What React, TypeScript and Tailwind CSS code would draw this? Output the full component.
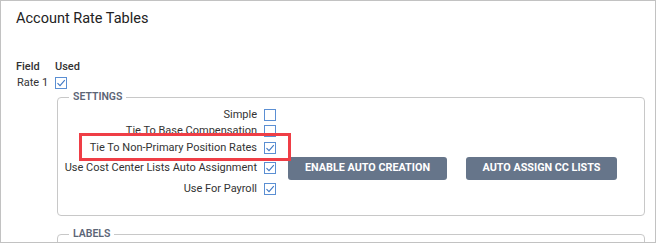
import React from "react";

function Check({ checked }: { checked?: boolean }) {
  return (
    <span className="flex h-[12px] w-[12px] shrink-0 items-center justify-center border border-[#5b8fd3] bg-white">
      {checked && (
        <svg width="10" height="10" viewBox="0 0 10 10" fill="none">
          <path d="M1.5 5.2 L4 7.7 L8.8 2.2" stroke="#3f78c4" strokeWidth="1.1" />
        </svg>
      )}
    </span>
  );
}

const settings = [
  { label: "Simple", checked: false, h: "h-[16px]" },
  { label: "Tie To Base Compensation", checked: false, h: "h-[16px]" },
  { label: "Tie To Non-Primary Position Rates", checked: true, h: "h-[17px]" },
  { label: "Use Cost Center Lists Auto Assignment", checked: true, h: "h-[24px]", buttons: true },
  { label: "Use For Payroll", checked: true, h: "h-[17px]" },
];

export default function App() {
  return (
    <div className="relative h-[243px] w-[656px] overflow-hidden border border-[#c2c2c2] bg-white font-['Roboto',sans-serif] text-[11px] text-[#333]">
      <h1 className="pl-[15px] pt-[8px] text-[14.5px] leading-[20px] text-[#222]">Account Rate Tables</h1>

      <div className="mt-[30px] grid grid-cols-[39px_auto] pl-[15px] font-medium leading-[16px]">
        <span>Field</span>
        <span>Used</span>
        <span className="pl-[1px] font-normal">Rate 1</span>
        <span className="flex h-[16px] items-center">
          <Check checked />
        </span>
      </div>

      <fieldset className="ml-[56px] mt-[-1px] h-[126px] w-[588px] rounded-[4px] border border-[#c8c8c8] px-0 pb-0">
        <legend className="ml-[11px] px-[4px] text-[10.5px] font-semibold leading-[14px] text-[#5c6576]">SETTINGS</legend>
        <div className="flex flex-col pt-[3px]">
          {settings.map((s) => (
            <div key={s.label} className={`flex items-center ${s.h}`}>
              <span className="w-[206px] pr-[7px] text-right leading-[16px] whitespace-nowrap">{s.label}</span>
              <Check checked={s.checked} />
              {s.buttons && (
                <div className="ml-[12px] flex gap-[19px]">
                  <button className="h-[23px] w-[159px] rounded-[3px] bg-[#66758a] text-[10.8px] font-bold text-white">
                    ENABLE AUTO CREATION
                  </button>
                  <button className="h-[23px] w-[151px] rounded-[3px] bg-[#66758a] text-[10.8px] font-bold text-white">
                    AUTO ASSIGN CC LISTS
                  </button>
                </div>
              )}
            </div>
          ))}
        </div>
      </fieldset>

      <fieldset className="ml-[56px] mt-[11px] h-[40px] w-[588px] rounded-[4px] border border-[#c8c8c8] px-0">
        <legend className="ml-[11px] px-[4px] text-[10.5px] font-semibold leading-[14px] text-[#5c6576]">LABELS</legend>
      </fieldset>

      <div className="absolute left-[78px] top-[132px] h-[28px] w-[212px] border-[3px] border-[#ef3e46]" />
    </div>
  );
}
